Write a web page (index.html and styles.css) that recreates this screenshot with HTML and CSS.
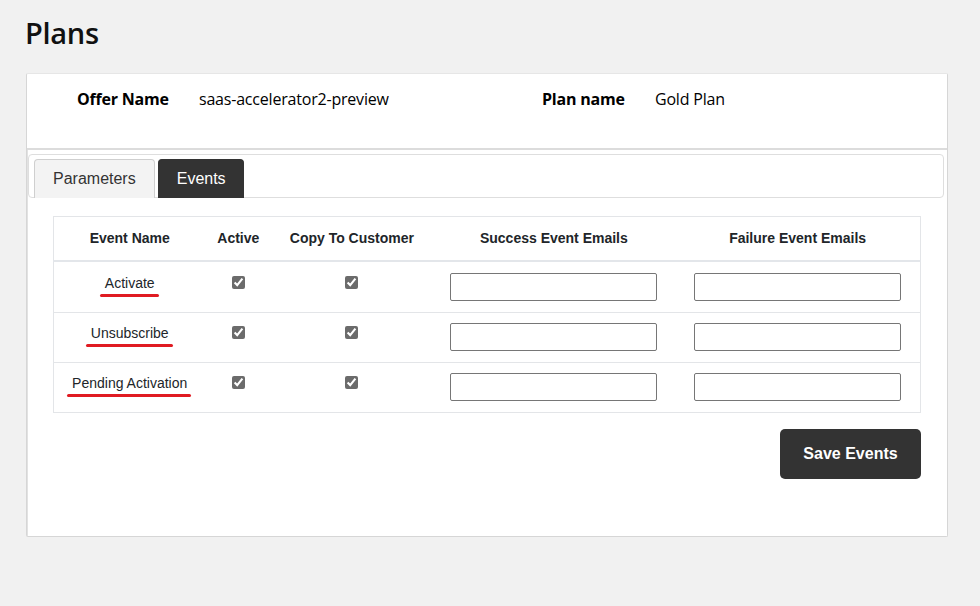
FILE: index.html
```html
<!DOCTYPE html>
<html>
<head>
<meta charset="utf-8">
<link rel="stylesheet" href="styles.css">
</head>
<body>
<h1 class="title">Plans</h1>
<div class="card">
  <div class="summary">
    <span class="label">Offer Name</span>
    <span class="value">saas-accelerator2-preview</span>
    <span class="label">Plan name</span>
    <span class="value">Gold Plan</span>
  </div>
  <div class="lower">
    <div class="tabs">
      <div class="tab">Parameters</div>
      <div class="tab active">Events</div>
    </div>
    <div class="content">
      <table class="events">
        <thead>
          <tr>
            <th class="c1">Event Name</th>
            <th class="c2">Active</th>
            <th class="c3">Copy To Customer</th>
            <th class="c4">Success Event Emails</th>
            <th class="c5">Failure Event Emails</th>
          </tr>
        </thead>
        <tbody>
          <tr>
            <td><span class="mark">Activate</span></td>
            <td><input type="checkbox" checked class="cb"></td>
            <td><input type="checkbox" checked class="cb"></td>
            <td><input type="text" class="txt"></td>
            <td><input type="text" class="txt"></td>
          </tr>
          <tr>
            <td><span class="mark">Unsubscribe</span></td>
            <td><input type="checkbox" checked class="cb"></td>
            <td><input type="checkbox" checked class="cb"></td>
            <td><input type="text" class="txt"></td>
            <td><input type="text" class="txt"></td>
          </tr>
          <tr>
            <td><span class="mark">Pending Activation</span></td>
            <td><input type="checkbox" checked class="cb"></td>
            <td><input type="checkbox" checked class="cb"></td>
            <td><input type="text" class="txt"></td>
            <td><input type="text" class="txt"></td>
          </tr>
        </tbody>
      </table>
      <div class="actions">
        <button class="save">Save Events</button>
      </div>
    </div>
  </div>
</div>
</body>
</html>
```
FILE: styles.css
```css
html, body {
  margin: 0;
  padding: 0;
  background: #f1f1f1;
}
body {
  font-family: "Open Sans", "Noto Sans", sans-serif;
  color: #000;
  padding: 0 32px 0 26px;
}
.title {
  margin: 0;
  padding: 13px 0 0 0;
  height: 60px;
  font-size: 29px;
  font-weight: 600;
  line-height: 40px;
  letter-spacing: -0.3px;
  color: #111;
  box-sizing: border-box;
  margin-left: -1px;
}
.card {
  margin-top: 13px;
  width: 922px;
  height: 464px;
  box-sizing: border-box;
  background: #fff;
  border: 1px solid #d6d6d6;
  border-top-color: #e6e6e6;
  border-radius: 2px;
  display: flex;
  flex-direction: column;
}
.summary {
  display: grid;
  grid-template-columns: 122px 343px 113px auto;
  padding: 13px 0 0 50px;
  height: 76px;
  box-sizing: border-box;
  border-bottom: 2px solid #dcdcdc;
  font-size: 16px;
  line-height: 24px;
  letter-spacing: -0.2px;
}
.label {
  font-weight: 700;
}
.lower {
  flex: 1;
  padding: 4px 3px 0 0;
  border-left: 1px solid #e2e2e2;
}
.tabs {
  display: flex;
  gap: 3px;
  height: 44px;
  box-sizing: border-box;
  border: 1px solid #dedede;
  border-radius: 4px;
  padding: 4px 0 0 5px;
  align-items: flex-end;
}
.tab {
  height: 39px;
  box-sizing: border-box;
  padding: 0 18px;
  display: flex;
  align-items: center;
  font-family: "Liberation Sans", Arial, sans-serif;
  font-size: 16px;
  color: #333;
  background: #f3f3f3;
  border: 1px solid #cfcfcf;
  border-bottom: none;
  border-radius: 4px 4px 0 0;
  margin-bottom: -1px;
}
.tab.active {
  background: #333;
  color: #fff;
  border-color: #333;
  padding: 0 17px 0 18px;
}
.content {
  padding: 18px 23px 0 25px;
}
.events {
  width: 868px;
  border-collapse: collapse;
  font-family: "Liberation Sans", Arial, sans-serif;
  font-size: 14px;
  color: #212529;
  border: 1px solid #e3e5e8;
}
.events th {
  font-weight: 700;
  text-align: center;
  padding: 11px 4px 11px 4px;
  line-height: 21px;
  border-bottom: 2px solid #e3e6ea;
}
.c1 { width: 144px; }
.c2 { width: 58px; }
.c3 { width: 154px; }
.c4 { width: 235px; }
.c5 { width: 237px; }
.events td {
  text-align: center;
  vertical-align: top;
  padding: 10px 4px 11px 4px;
  line-height: 21px;
  border-top: 1px solid #e3e5e8;
  height: 28px;
}
.events tbody tr:first-child td {
  border-top: none;
  padding-top: 11px;
}
.mark {
  position: relative;
  display: inline-block;
}
.mark::after {
  content: "";
  position: absolute;
  left: -5px;
  right: -4px;
  top: 21px;
  height: 2.5px;
  border-radius: 2px;
  background: #e01b22;
}
.cb {
  margin: 3px 0 0 0;
  width: 13px;
  height: 13px;
  accent-color: #6b6b6b;
}
.txt {
  box-sizing: border-box;
  width: 207px;
  height: 28px;
  margin: 0;
  border: 1px solid #767676;
  border-radius: 2px;
  background: #fff;
}
.actions {
  display: flex;
  justify-content: flex-end;
  padding-top: 16px;
}
.save {
  width: 141px;
  height: 50px;
  background: #333;
  color: #fff;
  border: none;
  border-radius: 5px;
  font-family: "Liberation Sans", Arial, sans-serif;
  font-weight: 700;
  font-size: 16px;
}
```
